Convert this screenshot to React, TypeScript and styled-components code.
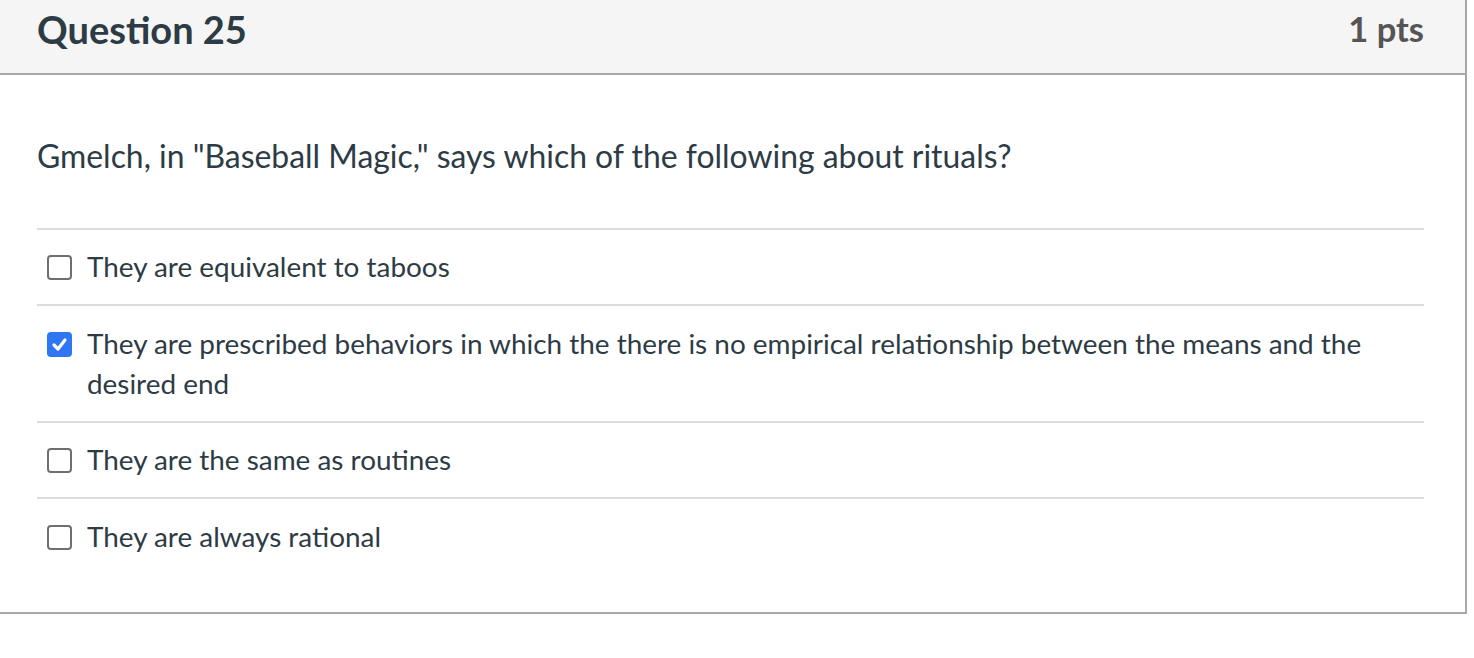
import React from "react";
import styled, { createGlobalStyle } from "styled-components";

const Global = createGlobalStyle`
  html, body { margin: 0; padding: 0; background: #fff; }
  body { font-family: Lato, "Noto Sans", sans-serif; color: #2d3b45; }
  * { box-sizing: border-box; }
`;

const Card = styled.div`
  width: 1467px;
  border-right: 2px solid #a8a8a8;
  border-bottom: 2px solid #a8a8a8;
  background: #fff;
`;

const Header = styled.div`
  height: 75px;
  background: #f5f5f5;
  border-bottom: 2px solid #a8a8a8;
  display: flex;
  align-items: center;
  justify-content: space-between;
  padding: 0 41px 0 37px;
`;

const Title = styled.h2`
  margin: 0;
  font-size: 38px;
  font-weight: 700;
  line-height: 44px;
  color: #2d3b45;
  padding-bottom: 16px;
`;

const Points = styled.div`
  font-size: 34.5px;
  font-weight: 700;
  line-height: 44px;
  color: #555;
  padding-bottom: 16px;
`;

const Body = styled.div`
  padding: 0 41px 38px 37px;
`;

const QuestionText = styled.p`
  margin: 0;
  padding: 59px 0 0;
  height: 153px;
  font-size: 31.9px;
  line-height: 44px;
`;

const Options = styled.div`
  display: flex;
  flex-direction: column;
`;

const Option = styled.label`
  display: flex;
  align-items: flex-start;
  gap: 15px;
  padding: 16.4px 0 18px 10px;
  border-top: 2px solid #dcdcdc;
  font-size: 27.9px;
  line-height: 40px;
`;

const Box = styled.span<{ $checked?: boolean }>`
  flex: none;
  width: 25px;
  height: 25px;
  margin-top: 9px;
  border-radius: 4px;
  border: ${(p) => (p.$checked ? "none" : "2px solid #6f6f6f")};
  background: ${(p) => (p.$checked ? "#2f76f2" : "#fff")};
  display: flex;
  align-items: center;
  justify-content: center;
`;

const options = [
  { text: "They are equivalent to taboos", checked: false },
  {
    text:
      "They are prescribed behaviors in which the there is no empirical relationship between the means and the desired end",
    checked: true,
  },
  { text: "They are the same as routines", checked: false },
  { text: "They are always rational", checked: false },
];

export default function App() {
  return (
    <>
      <Global />
      <Card>
        <Header>
          <Title>Question 25</Title>
          <Points>1 pts</Points>
        </Header>
        <Body>
          <QuestionText>
            Gmelch, in "Baseball Magic," says which of the following about rituals?
          </QuestionText>
          <Options>
            {options.map((o) => (
              <Option key={o.text}>
                <Box $checked={o.checked}>
                  {o.checked && (
                    <svg width="17" height="17" viewBox="0 0 17 17">
                      <path
                        d="M3 9 L7 13 L14 4"
                        fill="none"
                        stroke="#fff"
                        strokeWidth="3.2"
                        strokeLinecap="round"
                        strokeLinejoin="round"
                      />
                    </svg>
                  )}
                </Box>
                <span>{o.text}</span>
              </Option>
            ))}
          </Options>
        </Body>
      </Card>
    </>
  );
}
